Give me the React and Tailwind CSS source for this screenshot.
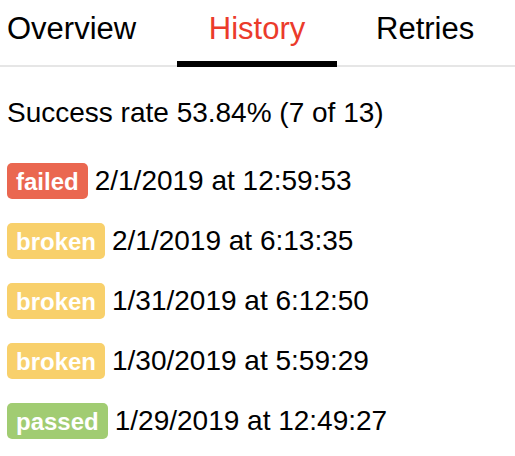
import React from "react";

var RUNS = [
  { status: "failed", at: "2/1/2019 at 12:59:53" },
  { status: "broken", at: "2/1/2019 at 6:13:35" },
  { status: "broken", at: "1/31/2019 at 6:12:50" },
  { status: "broken", at: "1/30/2019 at 5:59:29" },
  { status: "passed", at: "1/29/2019 at 12:49:27" },
];

var BADGE = {
  failed: "bg-[#ea6750]",
  broken: "bg-[#f8d06b]",
  passed: "bg-[#a1cc72]",
};

function Tabs() {
  return (
    <div className="flex border-b-2 border-[#e6e6e6] text-[31px] leading-[36px]">
      <div className="w-[177px] pl-[7px] pt-[11px] pb-[14px] border-b-[6px] border-transparent -mb-[2px] text-black">
        Overview
      </div>
      <div className="w-[160px] text-center pt-[11px] pb-[14px] border-b-[6px] border-black -mb-[2px] text-[#eb3b2b]">
        History
      </div>
      <div className="pl-[39px] pt-[11px] pb-[14px] border-b-[6px] border-transparent -mb-[2px] text-black">
        Retries
      </div>
    </div>
  );
}

export default function App() {
  return (
    <div className="w-[515px] h-[456px] bg-white overflow-hidden font-['Liberation_Sans',Arial,sans-serif] text-black">
      <Tabs />
      <div className="px-[7px]">
        <div className="mt-[30px] text-[28px] leading-[32px]">Success rate 53.84% (7 of 13)</div>
        <div className="mt-[34px] flex flex-col gap-6">
          {RUNS.map(function (r, i) {
            return (
              <div key={i} className="flex items-baseline">
                <span
                  className={
                    "rounded-[5px] px-[9px] pt-[5px] pb-[3px] text-[24px] leading-[28px] font-bold text-white " +
                    BADGE[r.status]
                  }
                >
                  {r.status}
                </span>
                <span className="ml-[7px] text-[28px] leading-[32px]">{r.at}</span>
              </div>
            );
          })}
        </div>
      </div>
    </div>
  );
}
